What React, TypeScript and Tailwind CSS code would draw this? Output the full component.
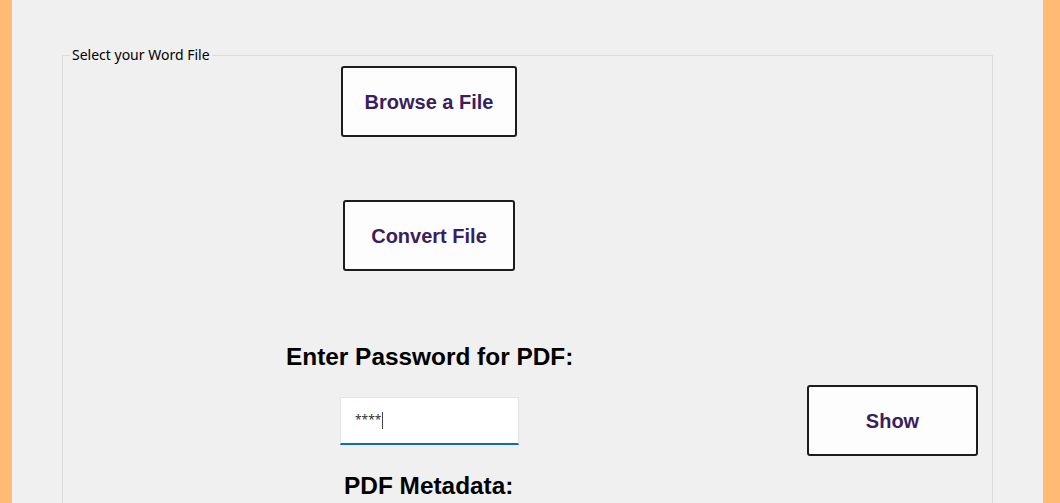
export default function App() {
  const btn =
    "flex items-center justify-center bg-[#fdfdfd] border-2 border-[#1c1c1c] rounded-[3px] text-[20px] font-bold text-[#3b1e5e]";

  return (
    <div
      className="flex w-[1060px] h-[503px] overflow-hidden bg-[#ffbb73]"
      style={{ fontFamily: '"Liberation Sans", Arial, sans-serif' }}
    >
      <div className="ml-[12px] mr-[17px] flex-1 bg-[#f0f0f0] overflow-hidden">
        {/* Group box */}
        <fieldset className="ml-[50px] mt-[47px] w-[931px] h-[600px] border border-[#dcdcdc] p-0 m-0">
          <legend
            className="ml-[7px] px-[2px] text-[14px] leading-[16px] text-black"
            style={{ fontFamily: '"Noto Sans", "Open Sans", sans-serif' }}
          >
            Select your Word File
          </legend>

          <div className="flex flex-col items-start">
            <button className={`${btn} ml-[278px] mt-[3px] w-[176px] h-[71px]`}>
              Browse a File
            </button>

            <button className={`${btn} ml-[280px] mt-[63px] w-[172px] h-[71px]`}>
              Convert File
            </button>

            <div className="ml-[223px] mt-[72px] text-[24.4px] leading-[28px] font-bold text-black">
              Enter Password for PDF:
            </div>

            <div className="flex items-center mt-[14px] h-[71px]">
              <div className="ml-[277px] w-[179px] h-[48px] bg-white border border-[#e3e3e3] border-b-2 border-b-[#0a6cc8] flex items-center pl-[14px]">
                <span
                  className="text-[12px] text-[#333]"
                  style={{ fontFamily: '"Noto Sans", sans-serif' }}
                >
                  ****
                </span>
                <span className="w-px h-[17px] bg-[#444] ml-[1px]" />
              </div>
              <button className={`${btn} ml-[288px] w-[171px] h-[71px]`}>
                Show
              </button>
            </div>

            <div className="ml-[281px] mt-[16px] text-[24.4px] leading-[28px] font-bold text-black">
              PDF Metadata:
            </div>
          </div>
        </fieldset>
      </div>
    </div>
  );
}
